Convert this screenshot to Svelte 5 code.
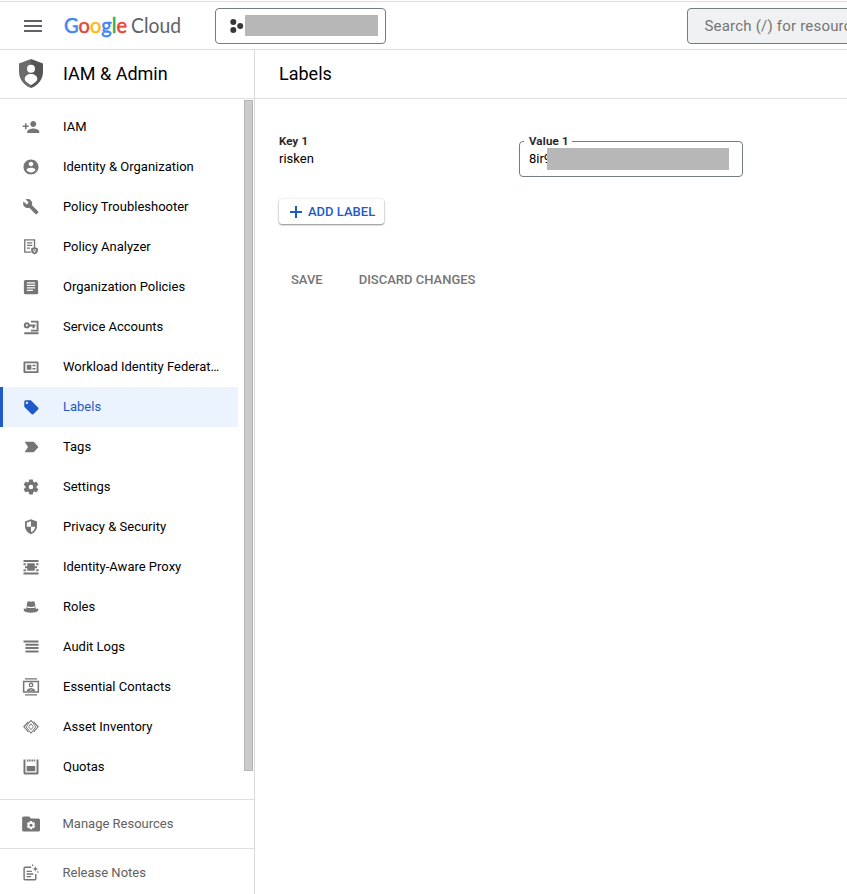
<script>
  const items = [
    { icon: 'iam', label: 'IAM' },
    { icon: 'identity', label: 'Identity & Organization' },
    { icon: 'wrench', label: 'Policy Troubleshooter' },
    { icon: 'analyzer', label: 'Policy Analyzer' },
    { icon: 'article', label: 'Organization Policies' },
    { icon: 'service', label: 'Service Accounts' },
    { icon: 'workload', label: 'Workload Identity Federation' },
    { icon: 'label', label: 'Labels', active: true },
    { icon: 'tag', label: 'Tags' },
    { icon: 'gear', label: 'Settings' },
    { icon: 'privacy', label: 'Privacy & Security' },
    { icon: 'proxy', label: 'Identity-Aware Proxy' },
    { icon: 'hat', label: 'Roles' },
    { icon: 'logs', label: 'Audit Logs' },
    { icon: 'contacts', label: 'Essential Contacts' },
    { icon: 'asset', label: 'Asset Inventory' },
    { icon: 'quotas', label: 'Quotas' }
  ];
  const footer = [
    { icon: 'folder', label: 'Manage Resources' },
    { icon: 'notes', label: 'Release Notes' }
  ];
  const logo = [
    ['G', '#4285f4'], ['o', '#ea4335'], ['o', '#fbbc04'],
    ['g', '#4285f4'], ['l', '#34a853'], ['e', '#ea4335']
  ];
</script>

{#snippet icon(name)}
  <svg class="icon" viewBox="0 0 24 24" width="18" height="18" fill="currentColor" aria-hidden="true">
    {#if name === 'iam'}
      <path d="M15 12c2.21 0 4-1.79 4-4s-1.79-4-4-4-4 1.79-4 4 1.79 4 4 4zm-9-2V7H4v3H1v2h3v3h2v-3h3v-2H6zm9 4c-2.67 0-8 1.34-8 4v2h16v-2c0-2.66-5.33-4-8-4z" />
    {:else if name === 'identity'}
      <path d="M12 2C6.48 2 2 6.48 2 12s4.48 10 10 10 10-4.48 10-10S17.52 2 12 2zm0 3c1.66 0 3 1.34 3 3s-1.34 3-3 3-3-1.34-3-3 1.34-3 3-3zm0 14.2c-2.5 0-4.71-1.28-6-3.22.03-1.99 4-3.08 6-3.08 1.99 0 5.97 1.09 6 3.08-1.29 1.94-3.5 3.22-6 3.22z" />
    {:else if name === 'wrench'}
      <path transform="translate(.6 .4) scale(.93)" d="M22.7 19l-9.1-9.1c.9-2.3.4-5-1.5-6.9-2-2-5-2.4-7.4-1.3L9 6 6 9 1.6 4.7C.4 7.1.9 10.1 2.9 12.1c1.900 1.900 4.600 2.400 6.900 1.500l9.100 9.100c.4.4 1 .4 1.400 0l2.300-2.300c.5-.4.5-1.100.1-1.400z" />
    {:else if name === 'analyzer'}
      <g transform="translate(-.8 -.6)">
        <path fill="none" stroke="currentColor" stroke-width="1.800" d="M13 19.500H4.500V3h13v9.500M7.500 7h7M7.500 10.500h7M7.500 14h4" />
        <path d="M17.500 12.500l4.500 1.800v3c0 2.600-1.900 4.500-4.500 5.200-2.600-.7-4.500-2.600-4.500-5.200v-3z" />
        <path fill="none" stroke="#fff" stroke-width=".8" d="M16 16.200h3v2h-3zM17.500 18v2.500" />
      </g>
    {:else if name === 'article'}
      <path d="M19.500 2.500h-15a2 2 0 0 0-2 2v15a2 2 0 0 0 2 2h15a2 2 0 0 0 2-2v-15a2 2 0 0 0-2-2zM14.500 17.300H6.500v-1.600h8zm3-3.300h-11v-1.600h11zm0-3.500h-11V8.900h11zm0-3.300h-11V5.600h11z" />
    {:else if name === 'service'}
      <path fill-rule="evenodd" d="M6.500 5.500a4.200 4.200 0 1 0 4 5.700H14v2.400h2.700v-2.400H18V8.500h-7.500a4.200 4.200 0 0 0-4-3zm0 2.700a1.500 1.500 0 1 1 0 3 1.500 1.500 0 0 1 0-3z" />
      <path d="M12 3.500h10V18H12v-2.500h7.500V6H12zM3 19h19v2.500H3z" />
    {:else if name === 'workload'}
      <path fill-rule="evenodd" d="M3.500 4.500h17a1.500 1.500 0 0 1 1.500 1.500v12.500a1.500 1.500 0 0 1-1.500 1.500h-17A1.500 1.500 0 0 1 2 18.500V6a1.500 1.500 0 0 1 1.500-1.500zM4.500 7v10.500h15V7z" />
      <path d="M6.500 9h6v6.500h-6zM14 9h4v2h-4zM14 13.300h4v2h-4z" />
    {:else if name === 'label'}
      <path d="M21.410 12.580l-9-9C12.050 3.220 11.550 3 11 3H5c-1.100 0-2 .9-2 2v6c0 .55.22 1.050.59 1.420l9 9c.36.36.86.58 1.410.58.55 0 1.050-.22 1.410-.59l6-6c.37-.36.59-.86.59-1.410 0-.55-.23-1.060-.59-1.420zM6.500 8C5.670 8 5 7.330 5 6.500S5.670 5 6.500 5 8 5.670 8 6.500 7.330 8 6.500 8z" />
    {:else if name === 'tag'}
      <path d="M3.500 19l4.500-7-4.500-7H15c.7 0 1.270.33 1.630.84L22 12l-5.370 6.160c-.36.51-.93.84-1.630.84z" />
    {:else if name === 'gear'}
      <path d="M19.500 12c0-.34-.03-.66-.07-.98l2.110-1.650a.5.5 0 0 0 .12-.64l-2-3.460a.5.5 0 0 0-.61-.22l-2.490 1a7.300 7.300 0 0 0-1.690-.98l-.38-2.650A.49.49 0 0 0 14 2h-4a.49.49 0 0 0-.49.420l-.38 2.650c-.61.25-1.170.59-1.690.98l-2.490-1a.49.49 0 0 0-.61.22l-2 3.460a.49.49 0 0 0 .12.640l2.110 1.650a7.900 7.900 0 0 0 0 1.960l-2.110 1.650a.5.5 0 0 0-.12.640l2 3.460c.12.220.39.300.61.220l2.490-1c.52.400 1.080.730 1.690.980l.38 2.650c.03.240.24.420.49.420h4c.25 0 .46-.18.49-.42l.38-2.650c.61-.25 1.170-.59 1.690-.98l2.490 1c.23.090.49 0 .61-.22l2-3.460a.5.5 0 0 0-.12-.64l-2.110-1.650c.04-.32.07-.64.07-.98zM12 15a3 3 0 1 1 0-6 3 3 0 0 1 0 6z" />
    {:else if name === 'privacy'}
      <path transform="translate(0 -.5)" d="M12 2L4 5.300v6c0 5 3.400 9.500 8 10.700 4.600-1.200 8-5.700 8-10.700v-6zM12 12h5.600c-.5 3.400-2.500 6.500-5.600 7.600V12H6.400V6.900L12 4.600z" />
    {:else if name === 'proxy'}
      <path d="M2 2.500h20v2.700H2zM2 19.300h20V22H2zM7 7h10v10H7zM2 7h3v2.500H2zM19 7h3v2.500h-3zM2 15h3v2.500H2zM19 15h3v2.500h-3zM4 11h4v2.500H4zM16 11h4v2.500h-4z" />
    {:else if name === 'hat'}
      <path d="M6 11L7 6q.5-2 2.200-1.700l2.800.8 2.800-.8Q16.500 4 17 6l1 5q-6 2.200-12 0zM5.500 12.300q6.500 2.300 13 0v2.700q-6.500 2.500-13 0zM2 14.500q1-.8 2.500-.2 7.500 3.200 15 0 1.500-.6 2.500.2 0 3-3 4.200-7 1.800-14 0-3-1.200-3-4.200z" />
    {:else if name === 'logs'}
      <path d="M2 3.300h20v2.700H2zM4.600 7.600H22v2.700H4.600zM4.600 12H22v2.700H4.600zM4.600 16.700H22v2.700H4.600z" />
    {:else if name === 'contacts'}
      <path d="M4 .2h16v1.900H4zM4 21.500h16v1.900H4z" />
      <path fill="none" stroke="currentColor" stroke-width="2" d="M2.200 4.800h19.600v14H2.200z" />
      <circle cx="12" cy="9.300" r="2.300" fill="none" stroke="currentColor" stroke-width="1.700" />
      <path d="M6.500 17.500q0-3.500 5.500-4.200 5.500.7 5.500 4.200zm3-1.200h5q-.8-1-2.500-1.100-1.700.1-2.500 1.100z" fill-rule="evenodd" />
    {:else if name === 'asset'}
      <g fill="none" stroke="currentColor" stroke-width="1.500">
        <path d="M8.500 5L2.500 11.700l6 6.700M15.500 5l6 6.700-6 6.700" />
        <path d="M14 5.200L12 3.200 5.500 11.700l6.500 8.500 2-2M10 18.200l2 2 6.500-8.500L12 3.200l-2 2" stroke-width="1.300" />
        <path d="M12 7.800l-3.300 3.900 3.300 3.900 3.300-3.900z" stroke-width="1.300" />
      </g>
    {:else if name === 'quotas'}
      <path d="M2 2h2.600v17.200h14.800V2H22v18a2 2 0 0 1-2 2H4a2 2 0 0 1-2-2zM6.300 10.500h11.400v7H6.300zM6.500 2h2v2.700h-2zM9.500 2h2v2.700h-2zM12.600 2h2v2.700h-2zM15.600 2h2v2.700h-2z" />
    {:else if name === 'folder'}
      <path d="M22 4.500H12L9.500 2H2.200A2 2 0 0 0 .2 4v16a2 2 0 0 0 2 2H22a2 2 0 0 0 2-2V6.500a2 2 0 0 0-2-2z" />
      <path stroke="#fff" stroke-width="3.400" d="M12 8v11M7.200 10.800l9.600 5.400M7.200 16.200l9.600-5.400" />
      <circle cx="12" cy="13.500" r="4" fill="#fff" />
      <circle cx="12" cy="13.500" r="2" />
    {:else if name === 'notes'}
      <g transform="translate(-.7 -.7)">
        <path fill="none" stroke="currentColor" stroke-width="1.900" d="M13 5H4.800A1.300 1.300 0 0 0 3.500 6.300v14.200a1.300 1.300 0 0 0 1.300 1.300h13a1.300 1.300 0 0 0 1.300-1.300V14M6.800 10.500h7M6.800 14h9M6.800 17.500h6" />
        <path d="M18.500 3.500l1 2.800 2.800 1-2.800 1-1 2.800-1-2.800-2.800-1 2.800-1zM14 1.500h1.700v1.700H14zM21 10.500h1.700v1.700H21z" />
      </g>
    {/if}
  </svg>
{/snippet}

<div class="page">
  <header class="topbar">
    <svg class="menu" width="18" height="12" viewBox="0 0 18 12" fill="#5f6368"><path d="M0 0h18v2H0zM0 5h18v2H0zM0 10h18v2H0z" /></svg>
    <svg class="logo" width="120" height="30" viewBox="0 0 120 30">
      <text x="0" y="21" textLength="63" lengthAdjust="spacingAndGlyphs">{#each logo as [ch, color]}<tspan fill={color} stroke={color}>{ch}</tspan>{/each}</text>
      <text class="cloud" x="67" y="21" textLength="50" lengthAdjust="spacingAndGlyphs" fill="#5f6368">Cloud</text>
    </svg>
    <button class="project" aria-label="Select project">
      <svg width="14" height="14" viewBox="0 0 14 14" fill="#37383b"><circle cx="3.300" cy="3" r="3" /><circle cx="3.300" cy="11" r="3" /><circle cx="10.200" cy="7" r="3" /></svg>
      <span class="mask"></span>
    </button>
    <div class="search">Search (/) for resources, docs, products, and more</div>
  </header>

  <div class="body">
    <aside>
      <div class="product">
        <svg width="24" height="29" viewBox="0 0 24 29">
          <path fill="#6b6b6b" d="M12 0L0 4.500V13c0 7 5 13.500 12 16z" />
          <path fill="#555" d="M12 0l12 4.500V13c0 7-5 13.500-12 16z" />
          <circle cx="12" cy="9.700" r="4" fill="#fff" />
          <path fill="#fff" d="M12 15c3.500 0 6.300 2 6.300 5 0 2.300-3.500 4.500-6.300 6-2.800-1.500-6.300-3.700-6.300-6 0-3 2.800-5 6.300-5z" />
        </svg>
        <h2>IAM &amp; Admin</h2>
      </div>
      <div class="scroller">
        <nav>
          {#each items as item}
            <div class="item" class:active={item.active}>
              {@render icon(item.icon)}
              <span>{item.label}</span>
            </div>
          {/each}
        </nav>
        <div class="track"><div class="thumb"></div></div>
      </div>
      {#each footer as item}
        <div class="foot">
          {@render icon(item.icon)}
          <span>{item.label}</span>
        </div>
      {/each}
    </aside>

    <main>
      <h1>Labels</h1>
      <div class="content">
        <div class="row">
          <div class="key">
            <b>Key 1</b>
            <span>risken</span>
          </div>
          <div class="field">
            <b>Value 1</b>
            <span>8ir9</span>
            <i class="mask"></i>
          </div>
        </div>
        <button class="add">
          <svg width="12" height="12" viewBox="0 0 12 12" fill="#1f5ac8"><path d="M5 0h2v5h5v2H7v5H5V7H0V5h5z" /></svg>
          ADD LABEL
        </button>
        <div class="actions">
          <span>SAVE</span>
          <span>DISCARD CHANGES</span>
        </div>
      </div>
    </main>
  </div>
</div>

<style>
  .page {
    box-sizing: border-box;
    width: 847px;
    height: 894px;
    padding-top: 1px;
    overflow: hidden;
    display: flex;
    flex-direction: column;
    background: #fff;
    color: #000;
    font: 13px/20px Roboto, sans-serif;
  }
  button { font: inherit; background: #fff; padding: 0; margin: 0; }
  .topbar {
    box-sizing: border-box;
    flex: none;
    height: 49px;
    border-top: 1px solid #dadada;
    border-bottom: 1px solid #dadada;
    display: flex;
    align-items: center;
    padding-left: 24px;
  }
  .menu { flex: none; margin-right: 22px; margin-top: 1px; }
  .logo { flex: none; margin-top: 2px; font: 20.500px Lato, sans-serif; overflow: visible; }
  .logo tspan { stroke-width: 0.5px; }
  .project {
    box-sizing: border-box;
    flex: none;
    width: 171px;
    height: 36px;
    margin-left: 31px;
    padding-left: 14px;
    border: 1px solid #747d80;
    border-radius: 4px;
    display: flex;
    align-items: center;
  }
  .mask { display: block; background: #b7b7b7; }
  .project .mask { width: 133px; height: 21px; margin: -1px 0 0 0.500px; }
  .search {
    box-sizing: border-box;
    flex: none;
    width: 400px;
    height: 36px;
    margin-left: 301px;
    padding-left: 16.500px;
    border: 1px solid #747d80;
    border-radius: 4px;
    background: #f0f1f2;
    color: #757575;
    font-size: 15px;
    line-height: 34px;
    letter-spacing: 0.2px;
    white-space: nowrap;
  }
  .body { flex: 1; display: flex; min-height: 0; }
  aside {
    box-sizing: border-box;
    width: 255px;
    border-right: 1px solid #dadada;
    display: flex;
    flex-direction: column;
  }
  .product {
    box-sizing: border-box;
    flex: none;
    height: 49px;
    padding-left: 19px;
    display: flex;
    align-items: center;
    gap: 20px;
    border-bottom: 1px solid #dfdfdf;
  }
  h1, h2 { margin: 0; font-weight: 400; font-size: 18px; line-height: 24px; }
  .product svg { margin-top: -1px; }
  .scroller { flex: none; height: 700px; display: flex; }
  nav { width: 238px; padding-top: 8px; }
  .item, .foot { display: flex; align-items: center; }
  .item { box-sizing: border-box; height: 40px; padding-left: 22px; }
  .icon { flex: none; margin-right: 23px; color: #757575; }
  .item span { width: 157px; white-space: nowrap; overflow: hidden; text-overflow: ellipsis; }
  .active { border-left: 3px solid #1f5ac8; padding-left: 19px; background: #ebf3fe; color: #1f5ac8; }
  .active .icon { color: #1f5ac8; }
  .track { padding: 1px 0 0 6px; }
  .thumb { box-sizing: border-box; width: 9px; height: 671px; background: #cbcbcb; border: 1px solid #b5b5b5; }
  .foot {
    box-sizing: border-box;
    flex: none;
    height: 49px;
    padding-left: 22px;
    border-top: 1px solid #dfdfdf;
    color: #616161;
  }
  .foot .icon { margin-right: 22.500px; }
  main { flex: 1; }
  h1 { height: 48px; padding-left: 24px; line-height: 48px; border-bottom: 1px solid #dfdfdf; }
  .content { padding: 32px 24px 0; }
  .row { display: flex; align-items: flex-start; }
  b { font-size: 11.500px; line-height: 18px; font-weight: 500; letter-spacing: 0.2px; color: #202124; -webkit-text-stroke: 0.2px #202124; }
  .key { width: 240px; padding-top: 1px; display: flex; flex-direction: column; line-height: 18px; }
  .field {
    position: relative;
    box-sizing: border-box;
    width: 224px;
    height: 36px;
    margin-top: 10px;
    padding-left: 9px;
    border: 1px solid #747d80;
    border-radius: 4px;
    line-height: 34px;
  }
  .field b { position: absolute; left: 4px; top: -10px; padding: 0 3px 0 5px; background: #fff; }
  .field .mask { position: absolute; left: 26.500px; top: 5.500px; width: 182px; height: 22px; }
  .add {
    width: 105px;
    height: 25px;
    margin-top: 22px;
    padding-left: 11px;
    border: 0;
    border-radius: 3px;
    box-shadow: 0 1px 2px rgba(0, 0, 0, 0.45), 0 0 2px rgba(0, 0, 0, 0.12);
    display: flex;
    align-items: center;
    gap: 6px;
    white-space: nowrap;
    color: #1f5ac8;
    font-weight: 500;
    font-size: 13px;
  }
  .actions { display: flex; gap: 36px; margin-top: 46px; padding-left: 12px; color: #757575; font-weight: 500; font-size: 13px; }
</style>
